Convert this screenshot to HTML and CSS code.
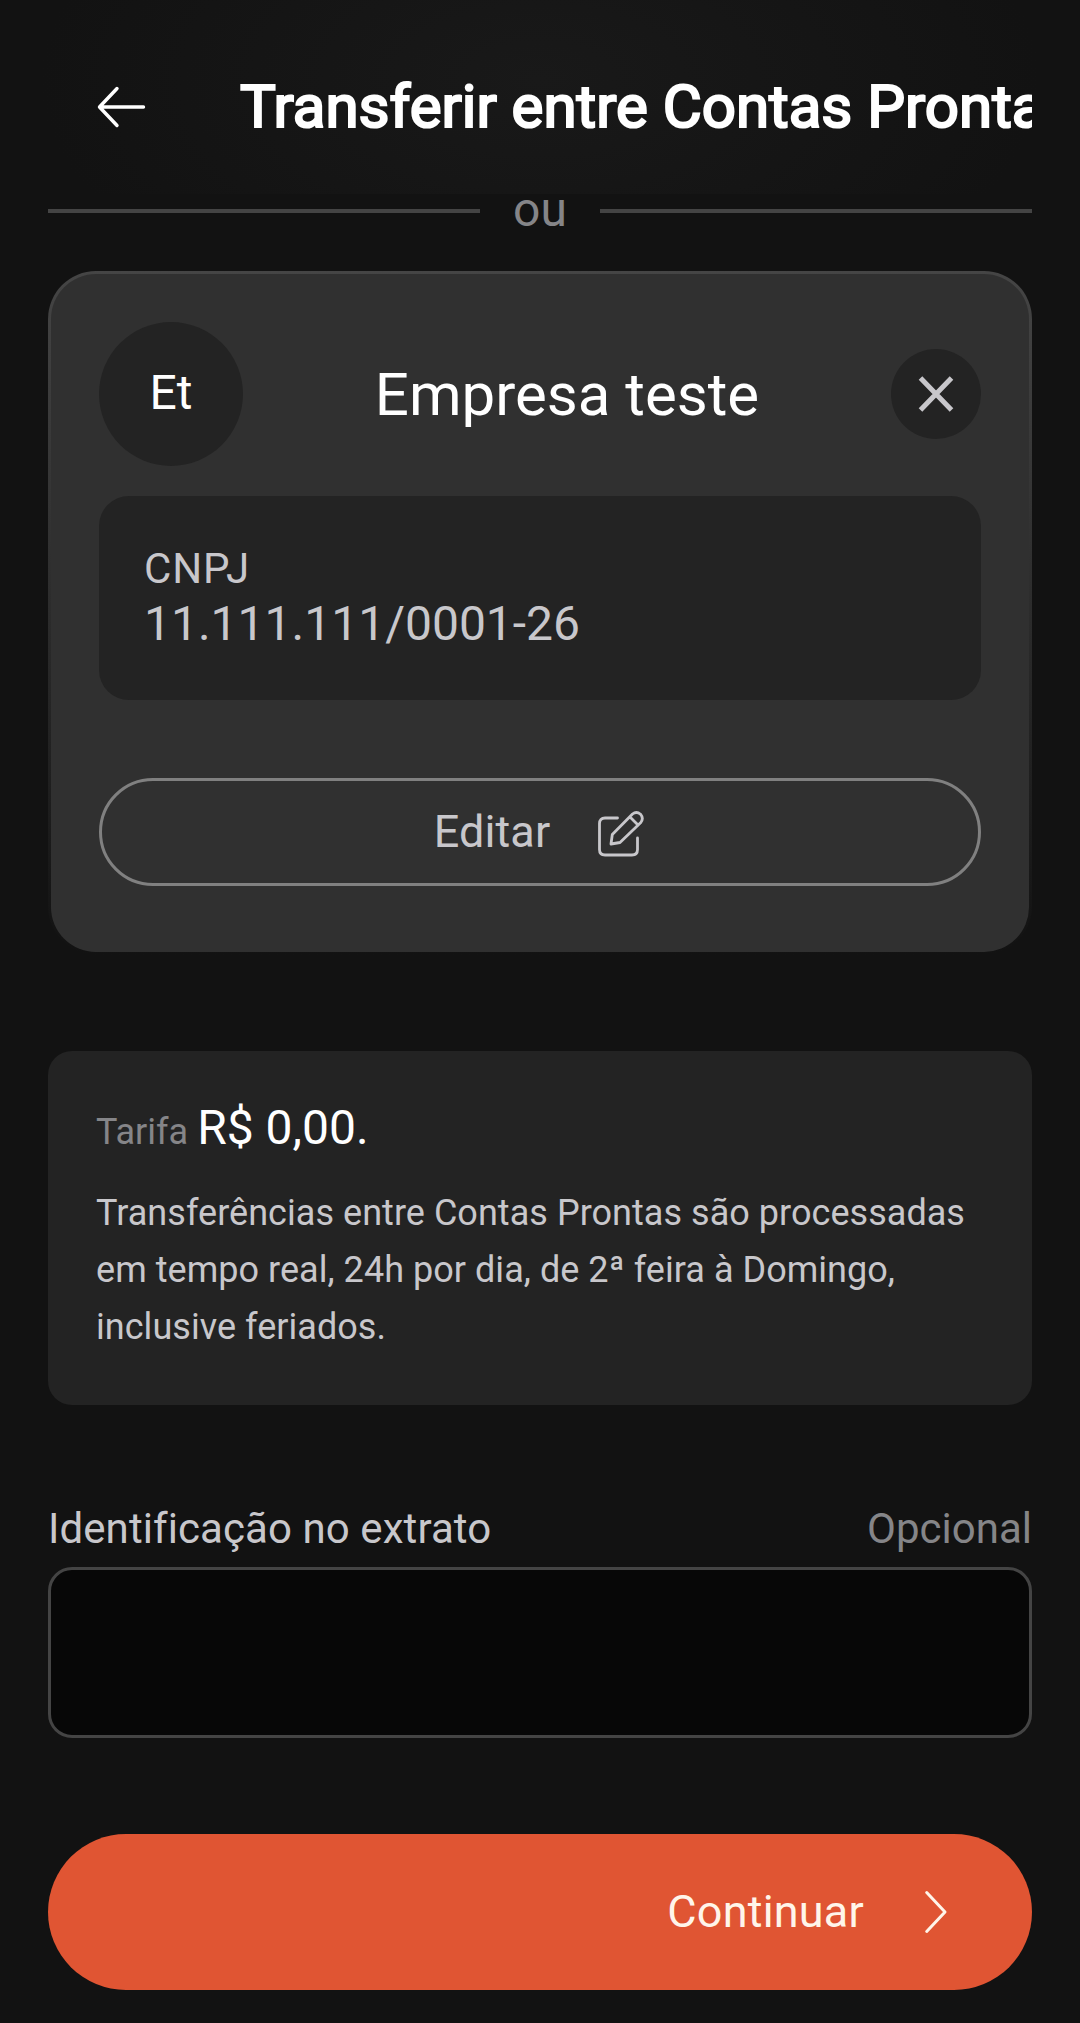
FILE: index.html
```html
<!DOCTYPE html>
<html lang="pt-BR">
<head>
<meta charset="utf-8">
<title>Transferir entre Contas Prontas</title>
<link rel="stylesheet" href="styles.css">
</head>
<body>
<header class="topbar">
  <svg class="back" width="51" height="48" viewBox="0 0 51 48" fill="none" stroke="#fff" stroke-width="3.4" stroke-linecap="round" stroke-linejoin="round"><path d="M21 5.500 3.500 24 21 42.500M4 24h43.500"/></svg>
  <h1 class="title">Transferir entre Contas Prontas</h1>
</header>
<main class="content">
  <div class="divider"><span class="divider-text">ou</span></div>
  <section class="card">
    <div class="payee">
      <div class="avatar">Et</div>
      <h2 class="payee-name">Empresa teste</h2>
      <button class="close" aria-label="Remover"><svg width="36" height="38" viewBox="0 0 36 38" fill="none" stroke="#c8c7cb" stroke-width="5"><path d="M2.500 3 33.500 35M33.500 3 2.500 35"/></svg></button>
    </div>
    <div class="document">
      <div class="document-label">CNPJ</div>
      <div class="document-value">11.111.111/0001-26</div>
    </div>
    <button class="edit"><span class="edit-text">Editar</span>
      <svg class="edit-icon" width="46" height="46" viewBox="0 0 46 46" fill="none" stroke="#c8c7cb" stroke-width="2.800" stroke-linecap="round" stroke-linejoin="round"><path d="M19.500 7H7Q1.500 7 1.500 12.500V38.500Q1.500 44 7 44H34Q39.500 44 39.500 38.500V27"/><path d="M13 33 14.300 23.500 34.500 3Q38.500-.2 42.500 3.200 46 7.500 42.800 11.500L22 31.500ZM32 6 39.500 13.500"/></svg>
    </button>
  </section>
  <section class="notice">
    <div class="fee"><span class="fee-label">Tarifa</span><span class="fee-value">R$ 0,00.</span></div>
    <p class="notice-text">Transferências entre Contas Prontas são processadas em tempo real, 24h por dia, de 2ª feira à Domingo, inclusive feriados.</p>
  </section>
  <div class="field-head"><label class="field-label" for="statement">Identificação no extrato</label><span class="optional">Opcional</span></div>
  <input class="field" id="statement" type="text">
  <button class="submit"><span class="submit-text">Continuar</span>
    <svg width="24" height="46" viewBox="0 0 24 46" fill="none" stroke="#fff5ea" stroke-width="3" stroke-linecap="round" stroke-linejoin="round"><path d="M2.700 3.500 21 23 2.700 42.500"/></svg>
  </button>
</main>
</body>
</html>
```
FILE: styles.css
```css
* {
  box-sizing: border-box;
}

body {
  margin: 0;
  min-height: 2023px;
  background: #121212;
  color: #fff;
  font-family: Roboto, "Liberation Sans", sans-serif;
  overflow: hidden;
}

button,
input {
  font: inherit;
}

h1,
h2,
p {
  margin: 0;
  font-weight: 400;
}

.topbar {
  position: relative;
  z-index: 1;
  display: flex;
  align-items: center;
  gap: 93px;
  height: 194px;
  padding: 20px 48px 0 96px;
  background: radial-gradient(ellipse 500px 260px at 540px 80px, #191919, rgba(25, 25, 25, 0));
}

.back {
  flex: none;
}

.title {
  flex: 1;
  min-width: 0;
  overflow: hidden;
  white-space: nowrap;
  font-size: 60px;
  line-height: 70px;
  -webkit-text-stroke: 2.2px #fff;
}

.content {
  padding: 0 48px;
}

.divider {
  display: flex;
  align-items: center;
  height: 56px;
  margin-top: -12px;
}

.divider::before,
.divider::after {
  content: "";
  width: 432px;
  height: 4px;
  margin-top: 2px;
  background: #444;
}

.divider-text {
  flex: 1;
  text-align: center;
  color: #858588;
  font-size: 48px;
  line-height: 56px;
}

.card {
  height: 684px;
  margin-top: 33px;
  padding: 48px;
  border: 3px solid transparent;
  border-radius: 48px;
  background:
    linear-gradient(#303030, #303030) padding-box,
    linear-gradient(#454545, #121212) border-box;
}

.payee {
  display: flex;
  align-items: center;
}

.avatar {
  width: 144px;
  height: 144px;
  border-radius: 50%;
  background: #232323;
  text-align: center;
  font-size: 48px;
  line-height: 141px;
}

.payee-name {
  flex: 1;
  padding-top: 2px;
  text-align: center;
  font-size: 60px;
  line-height: 70px;
}

.close {
  display: flex;
  align-items: center;
  justify-content: center;
  width: 90px;
  height: 90px;
  padding: 0;
  border: 0;
  border-radius: 50%;
  background: #232323;
}

.document {
  height: 204px;
  margin-top: 30px;
  padding: 48px 45px;
  border-radius: 30px;
  background: #232323;
  color: #c8c7cb;
}

.document-label {
  font-size: 42px;
  line-height: 50px;
  letter-spacing: 0.8px;
}

.document-value {
  font-size: 48px;
  line-height: 59px;
}

.edit {
  display: flex;
  align-items: center;
  justify-content: center;
  gap: 48px;
  width: 100%;
  height: 108px;
  margin-top: 78px;
  padding: 0 2px 0 0;
  border: 3px solid #808080;
  border-radius: 54px;
  background: none;
  color: #c8c7cb;
  font-size: 45px;
}

.edit-text {
  padding-bottom: 2px;
  letter-spacing: 0.1px;
}

.edit-icon {
  margin-top: 3px;
}

.notice {
  height: 354px;
  margin-top: 96px;
  padding: 47px 47px 47px 48px;
  border-radius: 24px;
  background: #232323;
}

.fee {
  display: flex;
  align-items: baseline;
  gap: 9px;
  height: 60px;
}

.fee-label {
  color: #858588;
  font-size: 36px;
}

.fee-value {
  font-size: 48px;
  line-height: 60px;
}

.notice-text {
  margin-top: 27px;
  color: #c8c7cb;
  font-size: 36px;
  line-height: 57px;
  letter-spacing: 0.04px;
}

.field-head {
  display: flex;
  justify-content: space-between;
  margin-top: 99px;
  color: #c8c7cb;
  font-size: 42px;
  line-height: 50px;
}

.field-label {
  letter-spacing: 0.08px;
}

.optional {
  color: #858588;
}

.field {
  display: block;
  width: 100%;
  height: 171px;
  margin-top: 13px;
  padding: 0 36px;
  border: 3px solid #444;
  border-radius: 24px;
  background: #070707;
  color: #fff;
  font-size: 48px;
}

.submit {
  display: flex;
  align-items: center;
  justify-content: flex-end;
  gap: 60px;
  width: 100%;
  height: 156px;
  margin-top: 96px;
  padding: 0 84px;
  border: 0;
  border-radius: 78px;
  background: #e05533;
  color: #fff5ea;
  font-size: 45px;
}

.submit-text {
  padding-bottom: 2px;
  letter-spacing: 0.2px;
}
```
